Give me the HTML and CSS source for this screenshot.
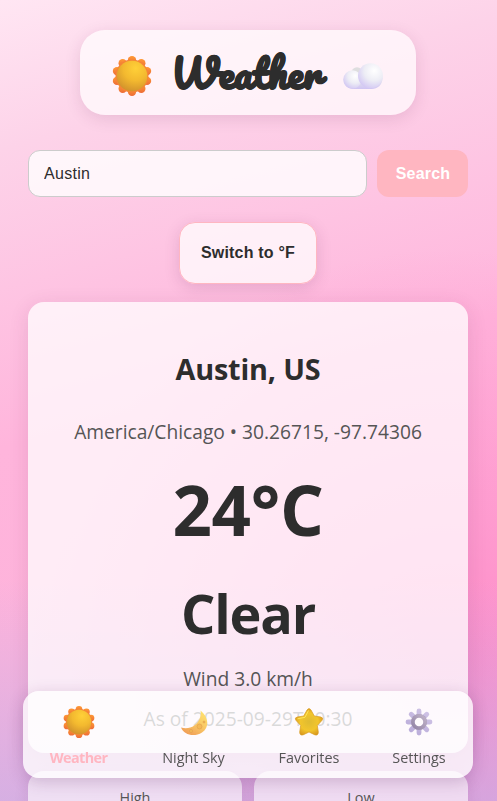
FILE: index.html
```html
<!DOCTYPE html>
<html lang="en">
<head>
<meta charset="utf-8">
<meta name="viewport" content="width=device-width, initial-scale=1">
<title>Weather</title>
<link rel="stylesheet" href="styles.css">
</head>
<body>
<svg class="defs" aria-hidden="true">
  <defs>
    <radialGradient id="disc" cx=".62" cy=".25" r=".8"><stop offset="0" stop-color="#ffd038"/><stop offset=".5" stop-color="#f3b92f"/><stop offset="1" stop-color="#d0902c"/></radialGradient>
    <linearGradient id="petal" x1="0" y1="0" x2="0" y2="1"><stop offset="0" stop-color="#ff9a35"/><stop offset="1" stop-color="#ed6c37"/></linearGradient>
    <radialGradient id="puff" cx=".65" cy=".3" r=".8"><stop offset="0" stop-color="#fff"/><stop offset=".5" stop-color="#ededf5"/><stop offset="1" stop-color="#cfc2f3"/></radialGradient>
    <linearGradient id="base" x1="0" y1="0" x2="0" y2="1"><stop offset=".3" stop-color="#e6e5ec"/><stop offset="1" stop-color="#cfc4f3"/></linearGradient>
    <linearGradient id="moon" x1=".8" y1="0" x2=".2" y2="1"><stop offset="0" stop-color="#ffe36f"/><stop offset=".55" stop-color="#f8c364"/><stop offset="1" stop-color="#f09a55"/></linearGradient>
    <radialGradient id="star" cx=".5" cy=".5" r=".55"><stop offset="0" stop-color="#dfbb32"/><stop offset=".6" stop-color="#f2c52c"/><stop offset="1" stop-color="#d9971f"/></radialGradient>
    <linearGradient id="gear" gradientUnits="userSpaceOnUse" x1="24" y1="4" x2="8" y2="28"><stop offset="0" stop-color="#d0c4e6"/><stop offset="1" stop-color="#b9abd9"/></linearGradient>
    <linearGradient id="hub" x1="1" y1="0" x2="0" y2="1"><stop offset="0" stop-color="#c0b3c8"/><stop offset="1" stop-color="#9384a6"/></linearGradient>
    <symbol id="sun" viewBox="0 0 40 40">
      <g fill="url(#petal)"><circle cx="20" cy="4.2" r="4.2"/><circle cx="29.3" cy="7.2" r="4.2"/><circle cx="35" cy="15.1" r="4.2"/><circle cx="35" cy="24.9" r="4.2"/><circle cx="29.3" cy="32.8" r="4.2"/><circle cx="20" cy="35.8" r="4.2"/><circle cx="10.7" cy="32.8" r="4.2"/><circle cx="5" cy="24.9" r="4.2"/><circle cx="5" cy="15.1" r="4.2"/><circle cx="10.7" cy="7.2" r="4.2"/><circle cx="20" cy="20" r="16.500" fill="#f58536"/></g>
      <circle cx="20" cy="20" r="15.3" fill="url(#disc)"/>
    </symbol>
  </defs>
</svg>
<main class="page">
  <header class="brand">
    <svg class="brand-sun"><use href="#sun"/></svg>
    <h1>Weather</h1>
    <svg class="brand-cloud" viewBox="0 0 40 27">
      <circle cx="14" cy="10" r="5.8" fill="#dededf"/>
      <path d="M9.500 26a9 9 0 0 1-8-13h26l12 2c0 7-5 11-11 11z" fill="url(#base)"/>
      <circle cx="9.500" cy="16.500" r="9.200" fill="url(#puff)"/>
      <circle cx="27.500" cy="12.800" r="12.500" fill="url(#puff)"/>
    </svg>
  </header>
  <form class="search">
    <input type="text" value="Austin" aria-label="City">
    <button type="button">Search</button>
  </form>
  <button class="unit" type="button">Switch to °F</button>
  <section class="current">
    <h2>Austin, US</h2>
    <p class="place">America/Chicago • 30.26715, -97.74306</p>
    <p class="temp">24°C</p>
    <p class="sky">Clear</p>
    <p class="wind">Wind 3.0 km/h</p>
    <p class="asof">As of 2025-09-29T20:30</p>
  </section>
  <section class="range">
    <div class="tile">High</div>
    <div class="tile">Low</div>
  </section>
</main>
<nav class="tabs">
  <a class="tab active"><svg><use href="#sun"/></svg><span>Weather</span></a>
  <a class="tab"><svg viewBox="0 0 32 32"><path d="M22.500 4.500C31 11 31.500 22 24 26.500C16 31.500 6 29 3 21.500C11 24 19 20 22 12C23 9 23 7 22.500 4.500Z" fill="url(#moon)"/><g fill="#f4b957" stroke="#df9d4d" stroke-width=".6"><circle cx="21.5" cy="20.500" r="2.500"/><circle cx="13" cy="25" r="1.500"/><circle cx="26" cy="16" r="1"/></g></svg><span>Night Sky</span></a>
  <a class="tab"><svg viewBox="0 0 32 32"><path d="M14 4Q16 1.200 18 4L21.300 10L27.800 11Q31 11.800 28.900 14.500L24.300 19.500L25.300 26Q25.300 29.800 22 28.900L16 26L10 28.900Q6.700 29.800 6.700 26L7.700 19.500L3.100 14.500Q1 11.800 4.200 11L10.700 10Z" fill="url(#star)" stroke="#d89e24" stroke-width=".7"/><path d="M15.500 4.500L12 11.300L4.500 12.800" fill="none" stroke="#ffe458" stroke-width="1"/></svg><span>Favorites</span></a>
  <a class="tab"><svg viewBox="0 0 32 32"><g stroke="url(#gear)" stroke-width="4.8" stroke-linecap="round"><path d="M16.010 5V27M5 16.010H27M8.200 8.200L23.800 23.800M8.200 23.800L23.800 8.200"/></g><circle cx="16" cy="16" r="8" fill="#aa9cba"/><circle cx="16" cy="16" r="6" fill="#fefafd" stroke="url(#hub)" stroke-width="3.500"/></svg><span>Settings</span></a>
</nav>
</body>
</html>
```

FILE: styles.css
```css
* { box-sizing: border-box; }
body {
  margin: 0;
  height: 801px;
  overflow: hidden;
  font-family: "Segoe UI", "Open Sans", "Noto Sans", sans-serif;
  color: #2d2d2d;
  background:
    linear-gradient(180deg, transparent 580px, rgba(190, 174, 232, .62) 801px),
    radial-gradient(ellipse 420px 440px at 90% 86%, rgba(255, 120, 190, .68), transparent),
    linear-gradient(165deg, #ffe6f3 0%, #fdd3e9 16%, #ffb5dc 48%, #fdb0da 100%);
}
.defs { position: absolute; width: 0; height: 0; }
.page { display: flex; flex-direction: column; align-items: center; padding: 30px 29px 0 28px; }
.brand {
  display: flex; align-items: center; width: 336px; height: 85px; padding: 0 32px;
  border-radius: 25px; background: rgba(255, 255, 255, .7); box-shadow: 0 4px 16px rgba(90, 30, 80, .13);
}
.brand svg { width: 40px; height: 40px; flex: none; }
.brand-sun { margin-top: 7px; }
.brand .brand-cloud { height: 27px; margin-top: 8px; }
h1 {
  flex: none; width: 150px; margin: 1px 22px 0 19px; white-space: nowrap;
  font: bold 39px/48px Pacifico, cursive; letter-spacing: .2px; -webkit-text-stroke: .6px #2d2d2d;
}
.search { display: flex; gap: 10px; width: 440px; margin-top: 35px; }
.search input {
  flex: 1; min-width: 0; height: 47px; padding: 0 15px; border: 1px solid #ccc; border-radius: 12px;
  background: rgba(255, 255, 255, .8); font: 16px "Liberation Sans", sans-serif; letter-spacing: .3px; color: #2d2d2d;
}
.search button {
  width: 91px; height: 47px; padding: 0 0 0 1px; border: 0; border-radius: 12px; background: #ffb6c1; color: #fff;
  font: bold 16px "Liberation Sans", sans-serif; letter-spacing: .2px;
}
.unit {
  width: 138px; height: 62px; margin-top: 25px; padding: 0; border: 1px solid #ffb6c1; border-radius: 16px;
  background: rgba(255, 255, 255, .75); color: #2d2d2d; box-shadow: 0 4px 15px rgba(90, 30, 80, .15);
  font: bold 16px "Liberation Sans", sans-serif; letter-spacing: .2px;
}
.current {
  width: 440px; height: 451px; margin-top: 18px; padding-top: 47px; border-radius: 16px; text-align: center;
  background: rgba(255, 255, 255, .75); box-shadow: 0 4px 20px rgba(90, 30, 80, .12);
}
.current p { margin: 0; white-space: nowrap; }
h2 { margin: 0; font-size: 28.800px; line-height: 40px; font-weight: 700; letter-spacing: -.15px; }
.current .place { margin-top: 28px; font-size: 19.200px; line-height: 30px; color: #555; letter-spacing: 0; }
.current .temp { margin-top: 13px; font-size: 69px; line-height: 98px; font-weight: 700; letter-spacing: -.3px; }
.current .sky { margin-top: 17px; font-size: 54px; line-height: 76px; font-weight: 700; letter-spacing: -1.200px; }
.current .wind, .current .asof { font-size: 19.200px; line-height: 30px; color: #555; margin-top: 13px; }
.current .asof { margin-top: 10px; }
.range { display: grid; grid-template-columns: 214px 214px; gap: 12px; margin-top: 18px; }
.tile {
  height: 90px; padding-top: 15px; border-radius: 16px; text-align: center; font-size: 14.400px; line-height: 24px; color: #555;
  background: rgba(255, 255, 255, .6); box-shadow: 0 4px 15px rgba(90, 30, 80, .1);
}
.tabs {
  position: fixed; left: 23px; bottom: 23px; width: 450px; height: 87px; display: grid;
  grid-template-columns: 111px 119px 112px 108px; border-radius: 16px;
  background: rgba(255, 255, 255, .78); box-shadow: 0 4px 16px rgba(80, 30, 90, .22);
}
.tab { display: flex; flex-direction: column; align-items: center; padding-top: 15px; font-size: 14.400px; line-height: 22px; color: #555; white-space: nowrap; }
.tab svg { width: 32px; height: 32px; margin-bottom: 9px; }
.tab.active { color: #ffb6c1; font-weight: 700; letter-spacing: -.6px; }
```
